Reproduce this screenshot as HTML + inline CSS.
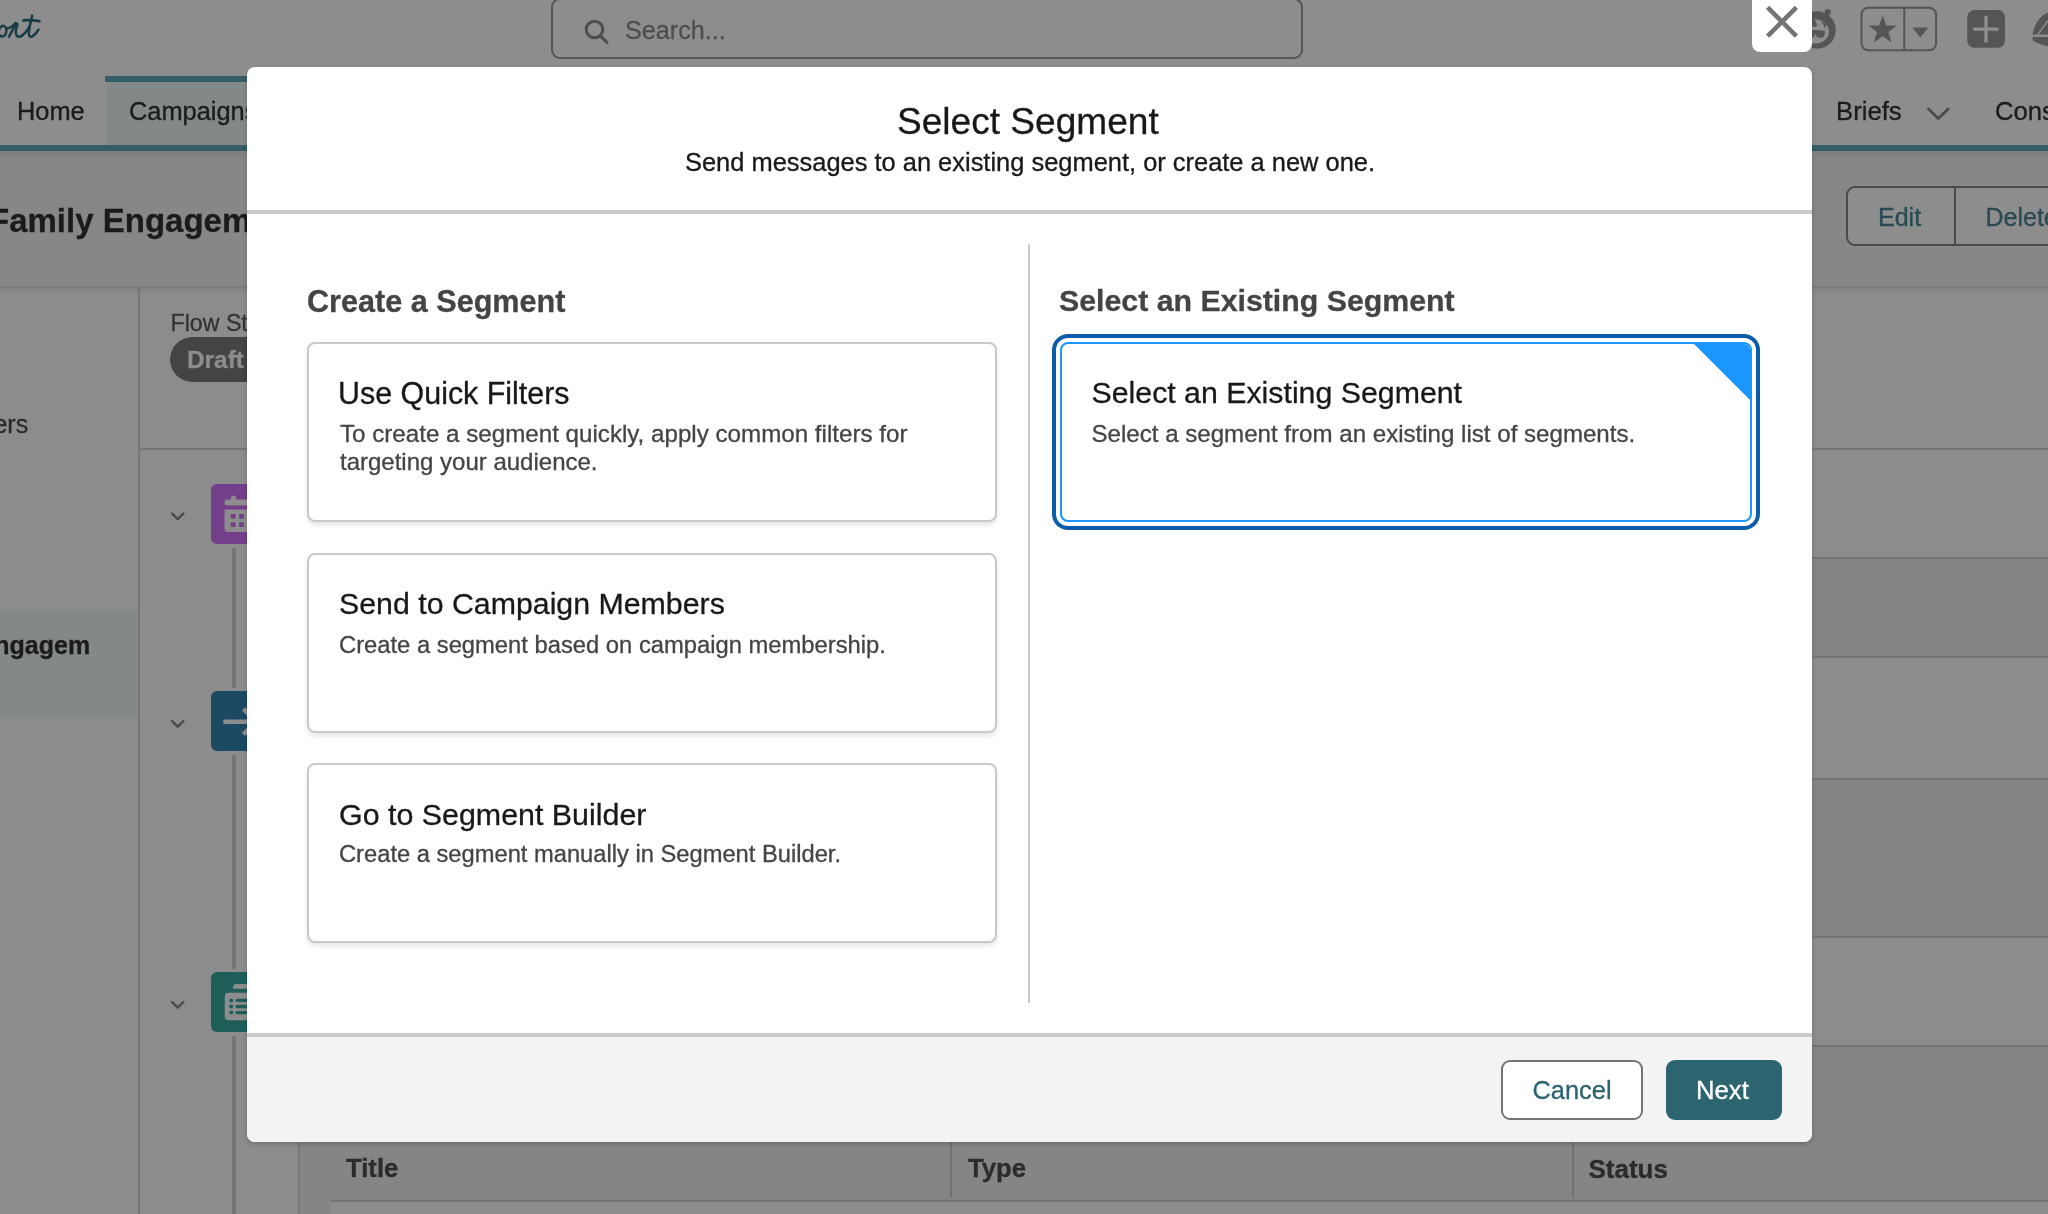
<!DOCTYPE html>
<html lang="en">
<head>
<meta charset="utf-8">
<title>Select Segment</title>
<style>
*{box-sizing:border-box;margin:0;padding:0}
html,body{width:2048px;height:1214px;overflow:hidden}
body{position:relative;background:#8d8d8d;font-family:"Liberation Sans",sans-serif;color:#181818}
.a{position:absolute}
.t{position:absolute;white-space:nowrap;line-height:1;-webkit-text-stroke:.3px}
.b{font-weight:bold}
/* ---------- dimmed background page ---------- */
#hdr{left:0;top:0;width:2048px;height:146px;background:#8d8d8d}
#pghead{left:0;top:151px;width:2048px;height:136px;background:#878787}
#navline{left:0;top:145px;width:2048px;height:6px;background:#355d65}
#navshadow{left:0;top:151px;width:2048px;height:10px;background:linear-gradient(#7e7e7e,#878787)}
#tabtop{left:105px;top:76px;width:150px;height:6px;background:#355d65}
#tabbg{left:107px;top:82px;width:150px;height:63px;background:#838888}
#body1{left:0;top:287px;width:2048px;height:927px;background:#8c8c8c}
#headline{left:0;top:286px;width:2048px;height:2px;background:#7b7b7b}
#headshadow{left:0;top:288px;width:2048px;height:8px;background:linear-gradient(#838383,#8c8c8c)}
#sideline{left:138px;top:288px;width:2px;height:926px;background:#767676}
#siderow{left:0;top:610px;width:138px;height:107px;background:#838888}
.hl{position:absolute;height:2px;background:#757575}
.dk{position:absolute;background:#858585}
.conn{position:absolute;left:232px;width:4px;background:#757575}
.ico{position:absolute;left:211px;width:60px;height:60px;border-radius:6px}
/* ---------- modal ---------- */
#modal{left:247px;top:67px;width:1565px;height:1075px;background:#fff;border-radius:8px;box-shadow:0 2px 4px rgba(0,0,0,.2);overflow:hidden}
#mhline{left:0;top:143px;width:1565px;height:4px;background:#c9c9c9}
#mfoot{left:0;top:966px;width:1565px;height:109px;background:#f3f3f3;border-top:4px solid #c9c9c9}
#vdiv{left:781px;top:177px;width:2px;height:759px;background:#c9c9c9}
.card{position:absolute;width:690px;height:180px;border:2px solid #c9c9c9;border-radius:8px;background:#fff;box-shadow:0 3px 5px rgba(0,0,0,.10)}
#closebtn{left:1752px;top:-8px;width:60px;height:60px;background:#fff;border-radius:8px}
.btn{position:absolute;top:1060px;height:60px;border-radius:9px}

.ct{font-size:30.2px;color:#181818}
.cd{font-size:23.9px;color:#444}
.card.sel{border-color:#1b96ff;box-shadow:0 0 0 4px #fff,0 0 0 8px #0b5cab;overflow:hidden}
#tri{right:0;top:0;width:0;height:0;border-top:56.500px solid #1b96ff;border-left:56.500px solid transparent}
#bcancel{background:#fff;border:2px solid #747474;top:993px}
#bnext{background:#2c6470;top:993px}
.btn{top:993px}
#all{position:absolute;left:0;top:0;width:2048px;height:1214px;overflow:hidden;will-change:transform}
</style>
</head>
<body>
<div id="all">
<!-- background chrome -->
<div class="a" id="hdr"></div>
<div class="a" id="pghead"></div>
<div class="a" id="navshadow"></div>
<div class="a" id="navline"></div>
<div class="a" id="tabbg"></div>
<div class="a" id="tabtop"></div>
<div class="a" id="body1"></div>
<div class="a" id="headshadow"></div>
<div class="a" id="headline"></div>


<!-- stripes right of / under modal -->
<div class="dk" style="left:299px;top:558px;width:1749px;height:99px"></div>
<div class="dk" style="left:299px;top:779px;width:1749px;height:158px"></div>
<div class="dk" style="left:299px;top:1047px;width:1749px;height:154px"></div>
<div class="dk" style="left:299px;top:1200px;width:31px;height:14px"></div>
<div class="hl" style="left:140px;top:448px;width:1908px"></div>
<div class="hl" style="left:299px;top:557px;width:1749px"></div>
<div class="hl" style="left:299px;top:656px;width:1749px"></div>
<div class="hl" style="left:299px;top:778px;width:1749px"></div>
<div class="hl" style="left:299px;top:936px;width:1749px"></div>
<div class="hl" style="left:299px;top:1045px;width:1749px"></div>
<div class="hl" style="left:330px;top:1200px;width:1718px"></div>
<div class="a" style="left:298px;top:1040px;width:2px;height:174px;background:#7a7a7a"></div>
<div class="a" style="left:950px;top:1140px;width:2px;height:58px;background:#727272"></div>
<div class="a" style="left:1572px;top:1140px;width:2px;height:58px;background:#727272"></div>
<div class="a" id="sideline"></div>
<div class="a" id="siderow"></div>

<!-- connectors + flow icons -->
<div class="conn" style="top:548px;height:140px"></div>
<div class="conn" style="top:755px;height:214px"></div>
<div class="conn" style="top:1036px;height:178px"></div>
<div class="ico" style="top:484px;background:#733e8a"></div>
<div class="ico" style="top:691px;background:#1c4a63"></div>
<div class="ico" style="top:972px;background:#1e5e58"></div>

<!-- search -->
<div class="a" id="search" style="left:551px;top:-2px;width:752px;height:61px;border:2px solid #555;border-radius:9px"></div>
<div class="t" id="tsearch" style="left:625px;top:18px;font-size:25.2px;color:#4e4e4e">Search...</div>

<!-- nav text -->
<div class="t" id="thome" style="left:17px;top:99px;font-size:25.4px;color:#1b1b1b">Home</div>
<div class="t" id="tcamp" style="left:129px;top:99px;font-size:25.4px;color:#1b1b1b">Campaigns</div>
<div class="t" id="tbriefs" style="left:1836px;top:99px;font-size:25.7px;color:#1b1b1b">Briefs</div>
<div class="t" id="tcons" style="left:1995px;top:99px;font-size:25.7px;color:#1b1b1b">Consent</div>

<!-- page header -->
<div class="t b" id="tfam" style="left:-11px;top:203.500px;font-size:33px;color:#1b1b1b">Family Engagement</div>
<div class="a" id="editgrp" style="left:1846px;top:186px;width:230px;height:60px;border:2px solid #4a4a4a;border-radius:9px;background:#8d8d8d"></div>
<div class="a" style="left:1954px;top:186px;width:2px;height:60px;background:#4a4a4a"></div>
<div class="t" id="tedit" style="left:1878px;top:204.500px;font-size:25px;color:#294a51">Edit</div>
<div class="t" id="tdel" style="left:1985.500px;top:204.500px;font-size:25px;color:#294a51">Delete</div>

<!-- sidebar text -->
<div class="t" id="ters" style="left:-76px;top:412px;font-size:25px;color:#2a2a2a">Members</div>
<div class="t b" id="tngag" style="left:-108.500px;top:633px;font-size:25px;color:#1b1b1b">Family Engagem</div>

<!-- flow status -->
<div class="t" id="tflow" style="left:170.500px;top:311.500px;font-size:23.2px;color:#333">Flow Status</div>
<div class="a" id="pill" style="left:170px;top:337px;width:110px;height:45px;border-radius:23px;background:#444"></div>
<div class="t b" id="tdraft" style="left:187px;top:348px;font-size:24.4px;color:#8d8d8d">Draft</div>

<!-- table header -->
<div class="t b" id="ttitle" style="left:346px;top:1155.500px;font-size:25.7px;color:#2b2b2b">Title</div>
<div class="t b" id="ttype" style="left:968px;top:1155.500px;font-size:25.7px;color:#2b2b2b">Type</div>
<div class="t b" id="tstatus" style="left:1588.500px;top:1155.500px;font-size:26px;color:#2b2b2b">Status</div>

<svg class="a" id="bgsvg" style="left:0;top:0" width="2048" height="1214" viewBox="0 0 2048 1214" fill="none">
  <!-- logo script "ort" -->
  <g stroke="#183c46" stroke-width="2.500" stroke-linecap="round" stroke-linejoin="round">
    <ellipse cx="2.600" cy="31.200" rx="3.700" ry="5.400" transform="rotate(12 2.600 31.200)"/>
    <path d="M6.500 28.300c3.200 .3 6.500-2 9-5.200"/>
    <path d="M9 36.600c2.600-4.400 4.600-9 6.700-13.200c.5 1 1.300 1.300 1.900 .9c-1.400 3.400-2.300 7-1.500 9.800c.7 2.600 2.700 3.300 4.700 2.200c3.200-1.800 6.800-6.300 9-10.200"/>
    <path d="M32.100 15.600c-1 5.500-3.100 12.500-3.300 17.800c-.1 3 1.600 3.900 3.500 2.900c2.200-1.200 4.700-4 6.200-6.600"/>
    <path d="M23.500 20.300c5.300-.3 10.800 0 15.800 .9" stroke-width="2.800"/>
  </g>
  <circle cx="15.900" cy="23.800" r="1.700" fill="#183c46"/>
  <!-- search icon -->
  <circle cx="594.500" cy="29.500" r="8.300" stroke="#4e4e4e" stroke-width="3"/>
  <path d="M600.500 35.800L607 42.500" stroke="#4e4e4e" stroke-width="3.200" stroke-linecap="round"/>
  <!-- chevrons (flow rows) -->
  <g stroke="#4a4a4a" stroke-width="2.400" stroke-linecap="round" stroke-linejoin="round">
    <path d="M172 513.500l5.700 5.700l5.700-5.700"/>
    <path d="M172 721l5.700 5.700l5.700-5.700"/>
    <path d="M172 1002l5.700 5.700l5.700-5.700"/>
  </g>
  <!-- briefs chevron -->
  <path d="M1928.500 109l9.800 9.600l9.800-9.600" stroke="#4a4a4a" stroke-width="2.800" stroke-linecap="round" stroke-linejoin="round"/>
  <!-- calendar icon (purple tile) -->
  <g fill="#8d8d8d">
    <rect x="224.500" y="499.500" width="34" height="6" rx="2.500"/>
    <rect x="231" y="495.500" width="5" height="8" rx="2.500"/>
    <path d="M224.500 509.500h34v19a3.500 3.500 0 0 1-3.500 3.500h-27a3.500 3.500 0 0 1-3.500-3.500z"/>
  </g>
  <g fill="#733e8a">
    <rect x="230.800" y="514" width="4.800" height="4.800" rx=".8"/>
    <rect x="239" y="514" width="4.800" height="4.800" rx=".8"/>
    <rect x="230.800" y="522.300" width="4.800" height="4.800" rx=".8"/>
    <rect x="239" y="522.300" width="4.800" height="4.800" rx=".8"/>
  </g>
  <!-- merge/arrow icon (blue tile) -->
  <g stroke="#8d8d8d" stroke-width="4.600" stroke-linecap="round">
    <path d="M225.300 721.700h32"/>
    <path d="M243.500 709l13 12.700l-13 12.700" stroke-linejoin="miter" stroke-linecap="butt"/>
  </g>
  <!-- list icon (teal tile) -->
  <g fill="#8d8d8d">
    <path d="M233 988.700v-1.200a3.500 3.500 0 0 1 3.500-3.500h20v4.700z"/>
    <rect x="224.700" y="992.800" width="34" height="27.400" rx="4"/>
  </g>
  <g fill="#1e5e58">
    <circle cx="231.200" cy="1000.400" r="2"/><rect x="235.500" y="998.700" width="16" height="3.400" rx="1.700"/>
    <circle cx="231.200" cy="1006.500" r="2"/><rect x="235.500" y="1004.800" width="16" height="3.400" rx="1.700"/>
    <circle cx="231.200" cy="1012.600" r="2"/><rect x="235.500" y="1010.900" width="16" height="3.400" rx="1.700"/>
  </g>
  <!-- astro icon -->
  <circle cx="1817" cy="30" r="18.800" fill="#555"/>
  <circle cx="1827.700" cy="12.200" r="3.100" fill="#555"/>
  <ellipse cx="1815.600" cy="31.600" rx="13.400" ry="12"  fill="#8d8d8d"/>
  <path d="M1808 19.500l6.800 .600l2.400 5.400l-1.600 1.200l-7.600 .200z" fill="#555"/>
  <path d="M1820.800 20.600l5.800 3.600q-.4 2.200-1.800 3.900q-1.200-4.200-4-7.500z" fill="#555"/>
  <path d="M1806 31.200q9.500-2.200 19 0l-.6 4.200q-.6 2.400-3.200 2.400h-2.200q-2.400 0-3-2.800l-.5-1.600l-.5 1.600q-.6 2.800-3 2.800h-2.200q-2.600 0-3.200-2.400z" fill="#555"/>
  <!-- favourites -->
  <rect x="1861.500" y="7.700" width="74.600" height="42.600" rx="7" stroke="#555" stroke-width="2"/>
  <path d="M1904.300 7v44" stroke="#555" stroke-width="2"/>
  <path d="M1882.700 15.200l3.500 10.200l10.700 .2l-8.500 6.500l3.100 10.300l-8.800-6.100l-8.800 6.100l3.100-10.300l-8.500-6.500l10.700-.2z" fill="#555"/>
  <path d="M1912.300 27.400h16l-8 10.200z" fill="#555"/>
  <!-- plus -->
  <rect x="1967.300" y="10" width="37.700" height="37.800" rx="7" fill="#555"/>
  <path d="M1973.200 29.100h25.400M1986 15.700v26.700" stroke="#8d8d8d" stroke-width="3.400"/>
  <!-- next icon, clipped by viewport -->
  <path d="M2032.600 34.400C2034 24.500 2040 15.500 2049 12.200V34.400z" fill="#555"/>
  <path d="M2037.800 34.400l9.800-13l2 .2" stroke="#8d8d8d" stroke-width="1.500" fill="none"/>
  <path d="M2032.600 36.900H2049V46.300C2042.500 45.300 2036.500 43 2032.600 40.200z" fill="#555"/>
</svg>

<!-- modal -->
<div class="a" id="closebtn"><svg class="a" style="left:0;top:8px" width="60" height="52" viewBox="0 0 60 52" fill="none"><path d="M15.600 7.400L44.400 36.200M44.400 7.400L15.600 36.200" stroke="#747474" stroke-width="4.600"/></svg></div>
<div class="a" id="modal">
  <div class="t" id="mtitle" style="left:650px;top:36px;font-size:37.1px;color:#181818">Select Segment</div>
  <div class="t" id="msub" style="left:438px;top:83px;font-size:25.44px;color:#181818">Send messages to an existing segment, or create a new one.</div>
  <div class="a" id="mhline"></div>
  <div class="a" id="vdiv"></div>

  <div class="t b" id="hleft" style="left:60px;top:219px;font-size:30.6px;color:#444">Create a Segment</div>
  <div class="t b" id="hright" style="left:812px;top:219px;font-size:30.3px;color:#444">Select an Existing Segment</div>

  <div class="card" id="card1" style="left:60px;top:275px">
    <div class="t ct" style="left:29px;top:34px;font-size:30.43px">Use Quick Filters</div>
    <div class="t cd" style="left:31px;top:78px;font-size:24.16px">To create a segment quickly, apply common filters for</div>
    <div class="t cd" style="left:31px;top:106px;font-size:24px">targeting your audience.</div>
  </div>
  <div class="card" id="card2" style="left:60px;top:486px">
    <div class="t ct" style="left:30px;top:34px;font-size:30.32px">Send to Campaign Members</div>
    <div class="t cd" style="left:30px;top:78px;font-size:23.77px">Create a segment based on campaign membership.</div>
  </div>
  <div class="card" id="card3" style="left:60px;top:696px">
    <div class="t ct" style="left:30px;top:34px;font-size:30.4px">Go to Segment Builder</div>
    <div class="t cd" style="left:30px;top:78px;font-size:23.71px">Create a segment manually in Segment Builder.</div>
  </div>
  <div class="card sel" id="card4" style="left:813px;top:275px;width:692px">
    <div class="a" id="tri"></div>
    <div class="t ct" style="left:29.500px;top:34px;font-size:30.31px">Select an Existing Segment</div>
    <div class="t cd" style="left:29.500px;top:78px;font-size:24.1px">Select a segment from an existing list of segments.</div>
  </div>

  <div class="a" id="mfoot"></div>
  <div class="a btn" id="bcancel" style="left:1254px;width:142px"><span class="t" style="left:29.500px;top:16px;font-size:25.4px;color:#2b6470">Cancel</span></div>
  <div class="a btn" id="bnext" style="left:1419px;width:116px"><span class="t" style="left:30px;top:18px;font-size:25.7px;color:#fff">Next</span></div>
</div>
</div>
</body>
</html>
